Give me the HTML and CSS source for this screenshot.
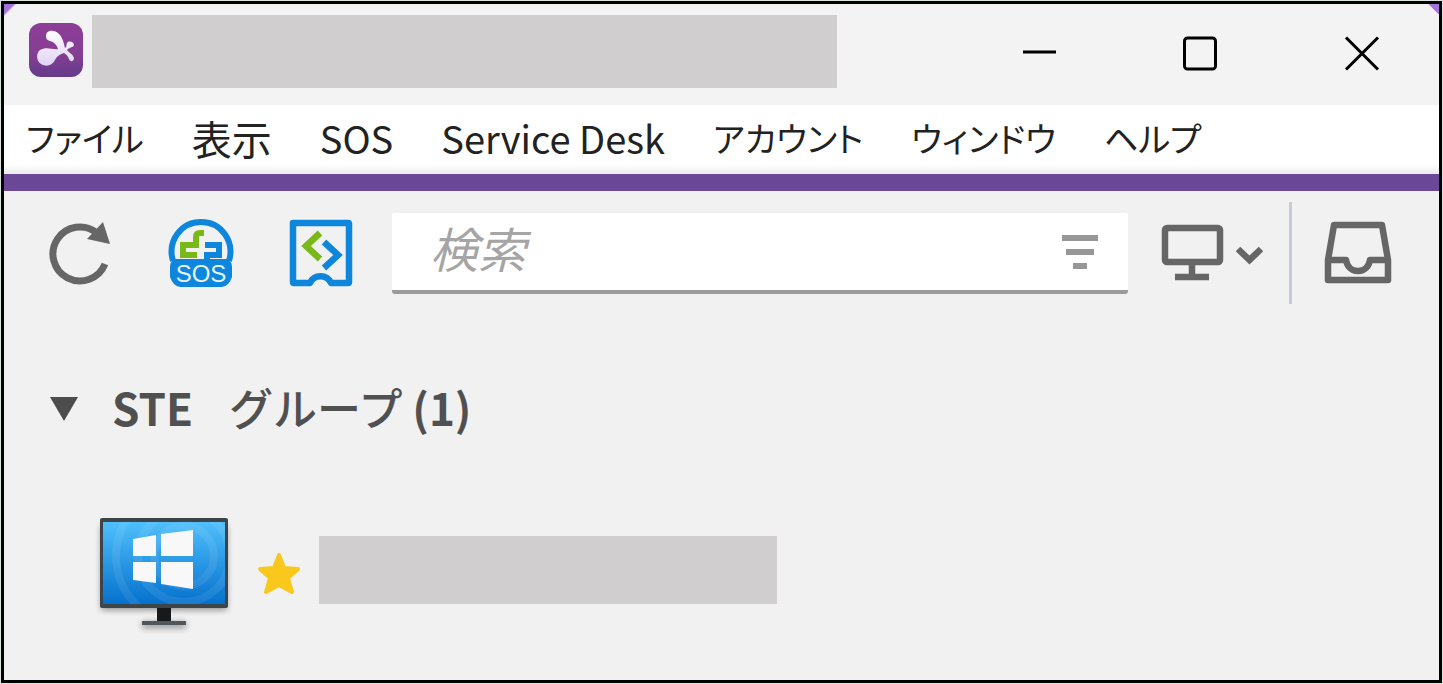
FILE: index.html
```html
<!DOCTYPE html>
<html lang="ja">
<head>
<meta charset="utf-8">
<title>STE</title>
<link rel="stylesheet" href="styles.css">
</head>
<body>
<div class="window">
  <header class="titlebar">
    <svg class="logo" viewBox="0 0 56 56" aria-hidden="true">
      <defs>
        <linearGradient id="logo-bg" x1="0" y1="0" x2="0" y2="1"><stop offset="0" stop-color="#8d3d97"/><stop offset=".55" stop-color="#853f93"/><stop offset="1" stop-color="#653b8a"/></linearGradient>
        <linearGradient id="logo-fg" x1="0" y1="0" x2="0" y2="1"><stop offset="0" stop-color="#fff"/><stop offset="1" stop-color="#e2d2f6"/></linearGradient>
      </defs>
      <rect x="1" y="1" width="54" height="54" rx="12" fill="url(#logo-bg)"/>
      <path fill="url(#logo-fg)" d="M18 14C18 8 26 7 31 12C35 16 36 22 37 26C39 25 38 23 39 21C41 18 46 20 46 23C45 26 41 25 39 28C41 31 45 32 46 36C46 40 42 40 41 37C40 34 38 32 36 31C32 32 29 34 27 38C24 44 18 45 13 42C8 39 8 31 12 28C18 24 25 28 30 27C29 23 26 20 22 19C19 18 18 17 18 14Z"/>
    </svg>
    <div class="redacted redacted-title"></div>
    <div class="window-controls">
      <button type="button" aria-label="最小化"><svg viewBox="0 0 40 40"><path d="M4 19H37"/></svg></button>
      <button type="button" aria-label="最大化"><svg viewBox="0 0 40 40"><rect x="4.500" y="5" width="31" height="31" rx="3"/></svg></button>
      <button type="button" aria-label="閉じる"><svg viewBox="0 0 40 40"><path d="M5 4.500 37 36.500M37 4.500 5 36.500"/></svg></button>
    </div>
  </header>

  <nav class="menubar">
    <button type="button" class="kana">ファイル</button>
    <button type="button" class="kanji">表示</button>
    <button type="button">SOS</button>
    <button type="button">Service Desk</button>
    <button type="button" class="kana">アカウント</button>
    <button type="button" class="kana">ウィンドウ</button>
    <button type="button" class="kana">ヘルプ</button>
  </nav>

  <div class="toolbar">
    <div class="tools">
      <button type="button" aria-label="更新">
        <svg viewBox="0 0 72 72"><path d="M60 47A27 27 0 1 1 52 16" fill="none" stroke="#666" stroke-width="7"/><path d="M58 5 65 27 42 22Z" fill="#666"/></svg>
      </button>
      <button type="button" aria-label="SOS">
        <svg viewBox="0 0 72 72">
          <path d="M8 44C2 24 16 5 36 5S70 24 64 44" fill="none" stroke="#0d86dc" stroke-width="6"/>
          <path d="M10 42H62Q67 44 67 50V60Q64 69 57 70H15Q8 69 5 60V50Q5 44 10 42Z" fill="#0d86dc"/>
          <path d="M39 16H35Q31 16 31 20V28H18V38H32" fill="none" stroke="#78b917" stroke-width="6"/>
          <path d="M40 28H54V38H42V43" fill="none" stroke="#0d86dc" stroke-width="6"/>
          <text x="36" y="65" text-anchor="middle" class="sos-label">SOS</text>
        </svg>
      </button>
      <button type="button" aria-label="Service Desk">
        <svg viewBox="0 0 72 72">
          <path d="M8 6H63Q64 6 64 7V65Q64 66 63 66H46C42 57 29 57 25 66H9Q8 66 8 65V7Q8 6 9 6Z" fill="none" stroke="#0d86dc" stroke-width="6.500" stroke-linejoin="round"/>
          <path d="M35 16 21 29 35 42" fill="none" stroke="#78b917" stroke-width="6.500"/>
          <path d="M39 25 53 38 39 51" fill="none" stroke="#0d86dc" stroke-width="6.500"/>
        </svg>
      </button>
    </div>
    <div class="search">
      <input type="text" placeholder="検索" aria-label="検索">
      <button type="button" aria-label="フィルター">
        <svg viewBox="0 0 36 36"><path d="M0 5H36M4 19H32M11 33H25" stroke="#979797" stroke-width="6"/></svg>
      </button>
    </div>
    <button type="button" class="view-button" aria-label="表示するコンピューター">
      <svg viewBox="0 0 104 60" fill="none" stroke="#666">
        <rect x="4" y="5" width="55" height="34" rx="2" stroke-width="6.500"/>
        <path d="M31 40V54M14 54H48" stroke-width="6.500"/>
        <path d="M77 26 88.500 37 100 26" stroke-width="6.500"/>
      </svg>
    </button>
    <div class="divider"></div>
    <button type="button" class="inbox-button" aria-label="受信トレイ">
      <svg viewBox="0 0 70 64" fill="none" stroke="#666" stroke-width="6.500" stroke-linejoin="round">
        <path d="M11 4H59L65 39V59H5V39Z"/><path d="M5 39H23C24 45 28 50 35 50S46 45 47 39H65"/>
      </svg>
    </button>
  </div>

  <main class="computers">
    <h1 class="group">
      <button type="button" aria-expanded="true">
        <svg viewBox="0 0 28 24" aria-hidden="true"><path d="M0 0H28L14 24Z" fill="#4d4d4d"/></svg>
        <span class="group-name"><b>STE</b><span class="wide-space">　</span><span class="group-kana">グループ</span> <b>(1)</b></span>
      </button>
    </h1>
    <div class="computer">
      <svg class="pc" viewBox="0 0 140 124" aria-hidden="true">
        <defs>
          <linearGradient id="screen" x1="0" y1="0" x2="0" y2="1"><stop offset="0" stop-color="#4fbffc"/><stop offset="1" stop-color="#0571cd"/></linearGradient>
          <filter id="shadow" x="-10%" y="-10%" width="120%" height="130%"><feGaussianBlur stdDeviation="3"/></filter>
          <clipPath id="screen-clip"><rect x="9" y="8" width="122" height="82"/></clipPath>
        </defs>
        <path d="M7 12H133V96H7ZM48 108H92V114H48Z" fill="#000" opacity=".4" filter="url(#shadow)"/>
        <rect x="6" y="4" width="128" height="90" rx="2" fill="#3d4549"/>
        <rect x="9" y="8" width="122" height="82" fill="url(#screen)"/>
        <g clip-path="url(#screen-clip)" fill="none" stroke="#fff" stroke-opacity=".08" stroke-width="8"><circle cx="90" cy="42" r="30"/><circle cx="90" cy="42" r="46"/><circle cx="90" cy="42" r="68"/></g>
        <path d="M39 25 62 21V42H39ZM67 20 99 16V42H67ZM39 48H62V69L39 66ZM67 48H99V75L67 70Z" fill="#f8f8f8"/>
        <path d="M63 94H77V108H63Z" fill="#161a1b"/><path d="M48 107H92V111H48Z" fill="#50575a"/>
      </svg>
      <svg class="star" viewBox="0 0 48 48" aria-hidden="true"><path d="M24 5 29 18 43 19 33 28 37 42 24 35 11 42 15 28 5 19 19 18Z" fill="#fac81c" stroke="#fac81c" stroke-width="4" stroke-linejoin="round"/></svg>
      <div class="redacted redacted-name"></div>
    </div>
  </main>
</div>
</body>
</html>
```
FILE: styles.css
```css
* { box-sizing: border-box; }

body {
  margin: 0;
  padding: 1px;
  background: #dde3dd;
  font-family: "Noto Sans CJK JP", sans-serif;
}

button {
  margin: 0;
  padding: 0;
  border: 0;
  background: none;
  color: inherit;
  font: inherit;
}

svg { display: block; flex: none; }

.window {
  display: flex;
  flex-direction: column;
  min-height: calc(100vh - 2px);
  border: 3px solid #000;
  background: #f1f1f1;
}

.titlebar {
  display: flex;
  align-items: flex-start;
  padding: 11px 0 17px 24px;
  background:
    linear-gradient(135deg, #a274dc 7px, transparent 9px),
    linear-gradient(225deg, #a274dc 7px, transparent 8px),
    #f3f3f3;
}

.logo { width: 56px; height: 56px; margin: 7px 8px 0 0; }

.redacted { background: #d0cece; }
.redacted-title { flex: 0 1 745px; height: 73px; }

.window-controls { display: flex; gap: 5px; margin: 18px 0 0 auto; }
.window-controls button { display: flex; justify-content: center; width: 156px; }
.window-controls svg {
  width: 40px;
  height: 40px;
  fill: none;
  stroke: #000;
  stroke-width: 3;
}

.menubar {
  display: flex;
  align-items: center;
  gap: 48px;
  height: 86px;
  padding: 0 22px 4px;
  border-bottom: 17px solid #6a4897;
  background: linear-gradient(#fff 60px, #ebebeb 69px);
  color: #222;
  font-size: 38px;
  line-height: 56px;
  white-space: nowrap;
}
.menubar .kana { font-size: 34px; font-feature-settings: "palt"; }
.menubar .kanji { font-size: 40px; }

.toolbar { display: flex; align-items: center; padding: 11px 46px 0 41px; }
.tools { display: flex; gap: 48px; }
.tools svg { width: 72px; height: 72px; }
.sos-label {
  fill: #e4f5ff;
  font-family: "Liberation Sans", sans-serif;
  font-size: 24px;
}

.search {
  display: flex;
  flex: 1;
  align-items: center;
  height: 81px;
  margin-left: 35px;
  padding: 0 30px 0 38px;
  border-bottom: 4px solid #9b9b9b;
  border-radius: 3px;
  background: #fff;
}
.search input {
  flex: 1;
  min-width: 0;
  padding: 0 0 8px;
  border: 0;
  outline: 0;
  background: none;
  color: #444;
  font: 48px/64px "Noto Sans CJK JP", sans-serif;
}
.search input::placeholder { color: #a5a5a5; font-style: italic; opacity: 1; }
.search svg { width: 36px; height: 36px; }

.view-button { margin-left: 33px; }
.view-button svg { width: 104px; height: 60px; }
.divider { width: 3px; height: 102px; margin: 0 31px 0 24px; background: #c5ccd3; }
.inbox-button svg { width: 70px; height: 64px; }

.computers { padding: 69px 46px 0; }

.group { margin: 0; color: #505050; font-size: 44px; font-weight: 400; line-height: 68px; }
.group button { display: flex; align-items: center; gap: 34px; }
.group svg { width: 28px; height: 24px; }
.group-kana { font-weight: 500; }
.wide-space { font-size: 36px; }

.computer { display: flex; align-items: center; padding-top: 70px; }
.pc { width: 140px; height: 124px; margin-left: 44px; }
.star { width: 48px; height: 48px; margin: 0 16px 4px 21px; }
.redacted-name { flex: 0 1 458px; height: 68px; margin-bottom: 12px; }
```
